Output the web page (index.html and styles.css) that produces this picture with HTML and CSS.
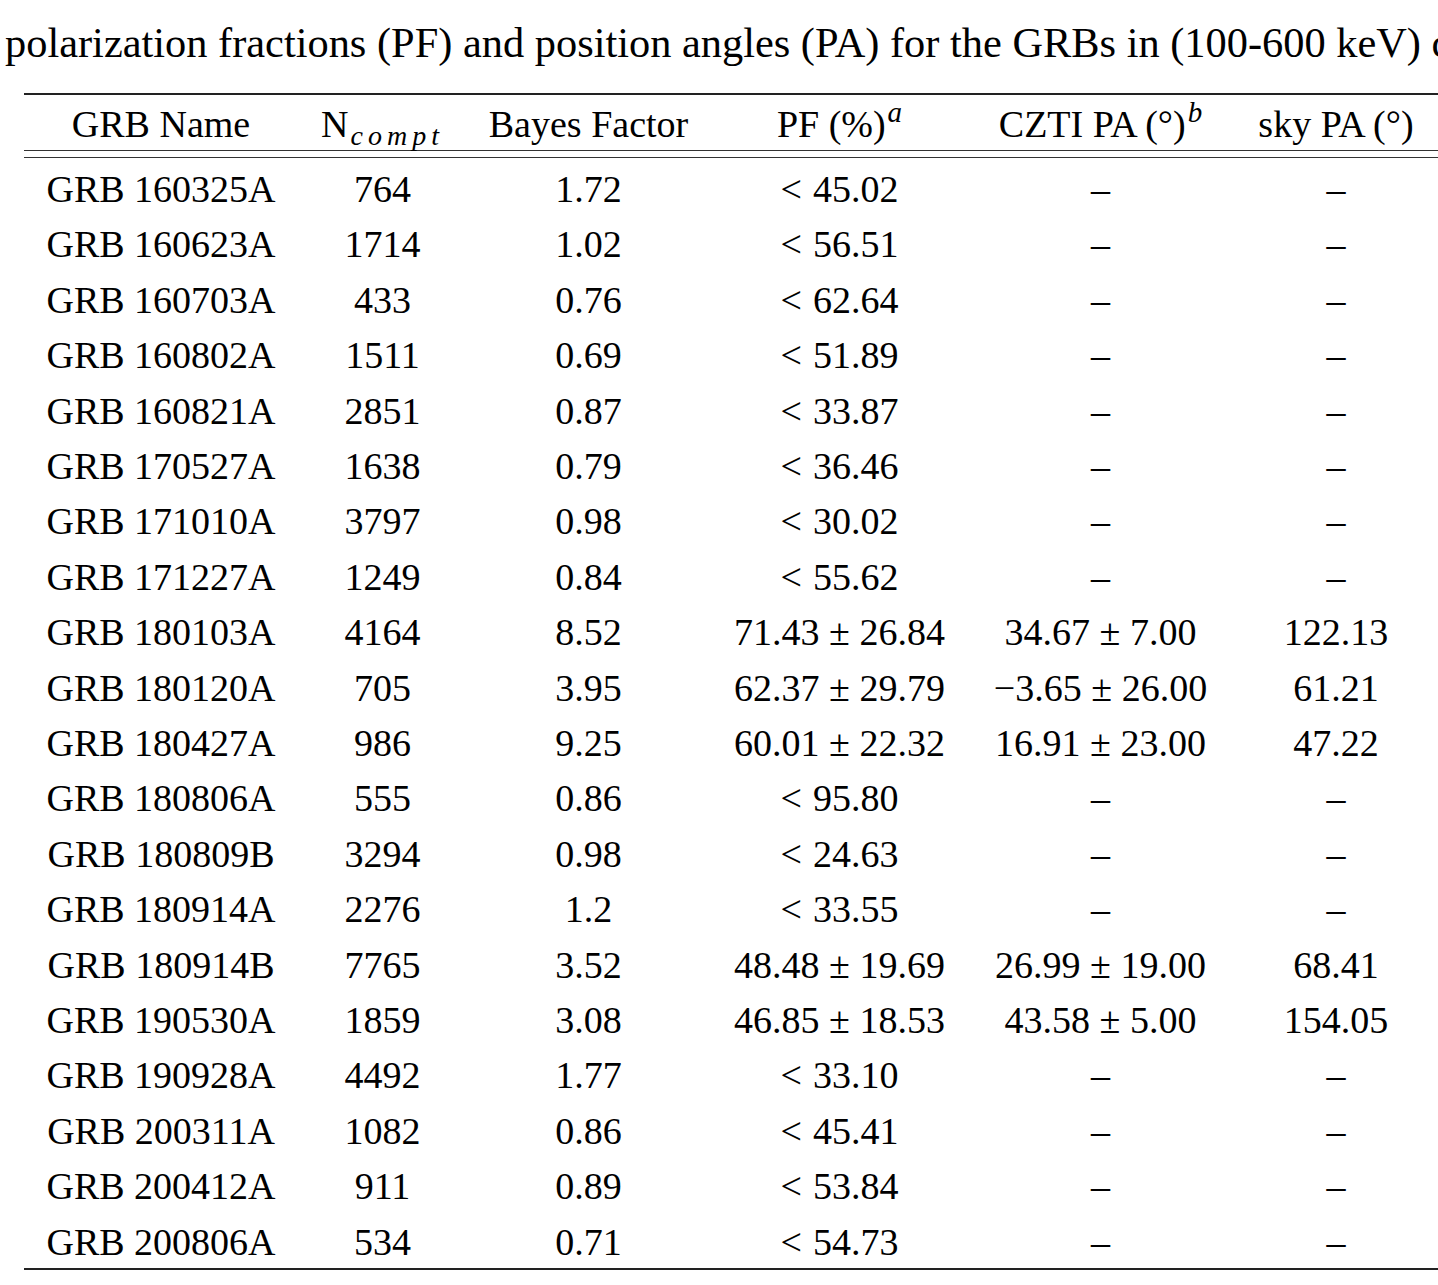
FILE: index.html
```html
<!DOCTYPE html>
<html>
<head>
<meta charset="utf-8">
<link rel="stylesheet" href="styles.css">
</head>
<body>
<div class="page">
  <p class="caption">polarization fractions (PF) and position angles (PA) for the GRBs in (100-600 keV) c</p>
  <div class="tbl">
    <div class="rule rule-top"></div>
    <div class="row head">
      <div class="cell">GRB Name</div>
      <div class="cell">N<sub class="sub">compt</sub></div>
      <div class="cell">Bayes Factor</div>
      <div class="cell">PF (%)<sup class="sup">a</sup></div>
      <div class="cell">CZTI PA (°)<sup class="sup">b</sup></div>
      <div class="cell">sky PA (°)</div>
    </div>
    <div class="rule-dbl"></div>
    <div class="rows">
      <div class="row"><div class="cell">GRB 160325A</div><div class="cell">764</div><div class="cell">1.72</div><div class="cell"><span class="rel">&lt;</span>45.02</div><div class="cell dash">–</div><div class="cell dash">–</div></div>
      <div class="row"><div class="cell">GRB 160623A</div><div class="cell">1714</div><div class="cell">1.02</div><div class="cell"><span class="rel">&lt;</span>56.51</div><div class="cell dash">–</div><div class="cell dash">–</div></div>
      <div class="row"><div class="cell">GRB 160703A</div><div class="cell">433</div><div class="cell">0.76</div><div class="cell"><span class="rel">&lt;</span>62.64</div><div class="cell dash">–</div><div class="cell dash">–</div></div>
      <div class="row"><div class="cell">GRB 160802A</div><div class="cell">1511</div><div class="cell">0.69</div><div class="cell"><span class="rel">&lt;</span>51.89</div><div class="cell dash">–</div><div class="cell dash">–</div></div>
      <div class="row"><div class="cell">GRB 160821A</div><div class="cell">2851</div><div class="cell">0.87</div><div class="cell"><span class="rel">&lt;</span>33.87</div><div class="cell dash">–</div><div class="cell dash">–</div></div>
      <div class="row"><div class="cell">GRB 170527A</div><div class="cell">1638</div><div class="cell">0.79</div><div class="cell"><span class="rel">&lt;</span>36.46</div><div class="cell dash">–</div><div class="cell dash">–</div></div>
      <div class="row"><div class="cell">GRB 171010A</div><div class="cell">3797</div><div class="cell">0.98</div><div class="cell"><span class="rel">&lt;</span>30.02</div><div class="cell dash">–</div><div class="cell dash">–</div></div>
      <div class="row"><div class="cell">GRB 171227A</div><div class="cell">1249</div><div class="cell">0.84</div><div class="cell"><span class="rel">&lt;</span>55.62</div><div class="cell dash">–</div><div class="cell dash">–</div></div>
      <div class="row"><div class="cell">GRB 180103A</div><div class="cell">4164</div><div class="cell">8.52</div><div class="cell">71.43 ± 26.84</div><div class="cell">34.67 ± 7.00</div><div class="cell">122.13</div></div>
      <div class="row"><div class="cell">GRB 180120A</div><div class="cell">705</div><div class="cell">3.95</div><div class="cell">62.37 ± 29.79</div><div class="cell">−3.65 ± 26.00</div><div class="cell">61.21</div></div>
      <div class="row"><div class="cell">GRB 180427A</div><div class="cell">986</div><div class="cell">9.25</div><div class="cell">60.01 ± 22.32</div><div class="cell">16.91 ± 23.00</div><div class="cell">47.22</div></div>
      <div class="row"><div class="cell">GRB 180806A</div><div class="cell">555</div><div class="cell">0.86</div><div class="cell"><span class="rel">&lt;</span>95.80</div><div class="cell dash">–</div><div class="cell dash">–</div></div>
      <div class="row"><div class="cell">GRB 180809B</div><div class="cell">3294</div><div class="cell">0.98</div><div class="cell"><span class="rel">&lt;</span>24.63</div><div class="cell dash">–</div><div class="cell dash">–</div></div>
      <div class="row"><div class="cell">GRB 180914A</div><div class="cell">2276</div><div class="cell">1.2</div><div class="cell"><span class="rel">&lt;</span>33.55</div><div class="cell dash">–</div><div class="cell dash">–</div></div>
      <div class="row"><div class="cell">GRB 180914B</div><div class="cell">7765</div><div class="cell">3.52</div><div class="cell">48.48 ± 19.69</div><div class="cell">26.99 ± 19.00</div><div class="cell">68.41</div></div>
      <div class="row"><div class="cell">GRB 190530A</div><div class="cell">1859</div><div class="cell">3.08</div><div class="cell">46.85 ± 18.53</div><div class="cell">43.58 ± 5.00</div><div class="cell">154.05</div></div>
      <div class="row"><div class="cell">GRB 190928A</div><div class="cell">4492</div><div class="cell">1.77</div><div class="cell"><span class="rel">&lt;</span>33.10</div><div class="cell dash">–</div><div class="cell dash">–</div></div>
      <div class="row"><div class="cell">GRB 200311A</div><div class="cell">1082</div><div class="cell">0.86</div><div class="cell"><span class="rel">&lt;</span>45.41</div><div class="cell dash">–</div><div class="cell dash">–</div></div>
      <div class="row"><div class="cell">GRB 200412A</div><div class="cell">911</div><div class="cell">0.89</div><div class="cell"><span class="rel">&lt;</span>53.84</div><div class="cell dash">–</div><div class="cell dash">–</div></div>
      <div class="row"><div class="cell">GRB 200806A</div><div class="cell">534</div><div class="cell">0.71</div><div class="cell"><span class="rel">&lt;</span>54.73</div><div class="cell dash">–</div><div class="cell dash">–</div></div>
    </div>
    <div class="rule rule-bottom"></div>
  </div>
</div>
</body>
</html>
```

FILE: styles.css
```css
html, body {
  margin: 0;
  padding: 0;
  background: #ffffff;
  overflow: hidden;
}

.page {
  width: 1438px;
  height: 1285px;
  overflow: hidden;
  font-family: "Liberation Serif", "Times New Roman", serif;
  font-size: 38px;
  color: #000000;
}

.caption {
  margin: 0;
  padding: 20px 0 0 5px;
  font-size: 42.4px;
  line-height: 45.6px;
  height: 45.6px;
  white-space: nowrap;
}

.tbl {
  margin: 27px 0 0 24px;
  width: 1416px;
}

.rule {
  height: 2px;
  background: #222222;
}

.rule-dbl {
  height: 6px;
  border-top: 1.5px solid #333333;
  border-bottom: 1.5px solid #333333;
}

.rows {
  padding-top: 4.5px;
}

.row {
  display: grid;
  grid-template-columns: 274px 169px 243px 259px 263px 208px;
  height: 55.4px;
  line-height: 55.4px;
}

.head {
  height: 55px;
  line-height: 59px;
}

.cell {
  text-align: center;
  white-space: nowrap;
}

.rel {
  margin-right: 11px;
}

.sub {
  font-style: italic;
  font-size: 28px;
  letter-spacing: 5px;
  vertical-align: -8px;
  line-height: 0;
  margin-left: 2px;
}

.sup {
  font-style: italic;
  font-size: 29px;
  vertical-align: 15px;
  line-height: 0;
  margin-left: 2px;
}

.rule-bottom {
  margin-top: -1.5px;
}
```
